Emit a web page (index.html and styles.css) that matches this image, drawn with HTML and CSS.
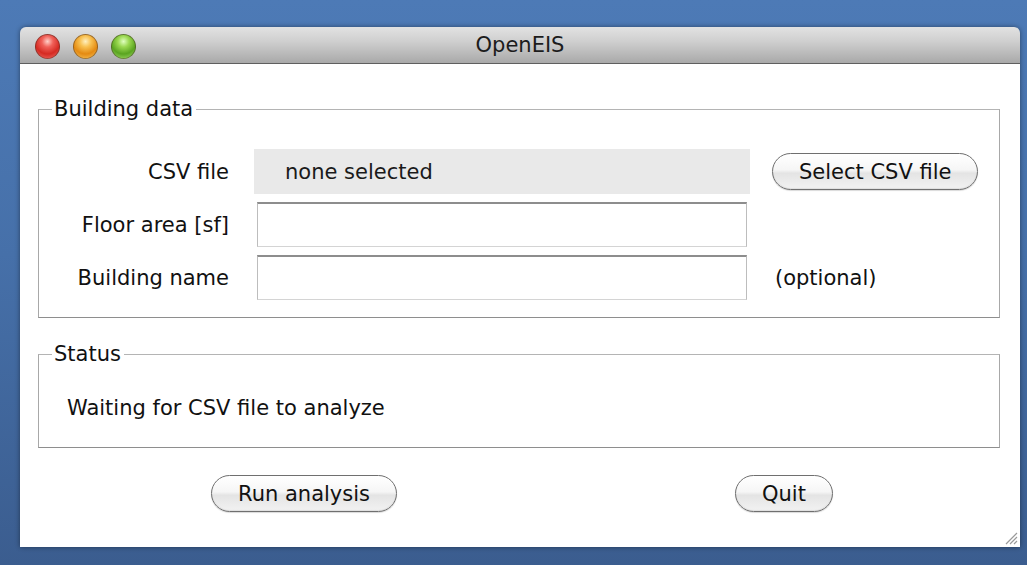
FILE: index.html
```html
<!DOCTYPE html>
<html>
<head>
<meta charset="utf-8">
<title>OpenEIS</title>
<link rel="stylesheet" href="styles.css">
</head>
<body>
<div class="window">
  <div class="titlebar">
    <div class="lights">
      <span class="light red"></span>
      <span class="light amber"></span>
      <span class="light green"></span>
    </div>
    <div class="title">OpenEIS</div>
  </div>
  <div class="pane">
    <fieldset class="group building">
      <legend>Building data</legend>
      <div class="form">
        <label class="lbl">CSV file</label>
        <div class="filebox">none selected</div>
        <button class="pill">Select CSV file</button>

        <label class="lbl">Floor area [sf]</label>
        <div class="field"></div>
        <span></span>

        <label class="lbl">Building name</label>
        <div class="field"></div>
        <span class="note">(optional)</span>
      </div>
    </fieldset>

    <fieldset class="group status">
      <legend>Status</legend>
      <p class="status-text">Waiting for CSV file to analyze</p>
    </fieldset>

    <div class="actions">
      <button class="pill">Run analysis</button>
      <button class="pill">Quit</button>
    </div>

    <svg class="grip" width="16" height="16" viewBox="0 0 16 16">
      <path d="M15 4 L4 15 M15 8 L8 15 M15 12 L12 15" stroke="#9a9a9a" stroke-width="1.2" fill="none"/>
    </svg>
  </div>
</div>
</body>
</html>
```

FILE: styles.css
```css
html, body {
  margin: 0;
  padding: 0;
}

body {
  width: 1027px;
  height: 565px;
  overflow: hidden;
  background: linear-gradient(180deg, #4d7ab6 0%, #4670a9 45%, #3b5d8f 100%);
  font-family: "DejaVu Sans", "Liberation Sans", sans-serif;
  color: #111111;
}

.window {
  margin: 27px 0 0 20px;
  width: 1000px;
  height: 520px;
  display: flex;
  flex-direction: column;
  border-radius: 6px 6px 0 0;
  box-shadow: 0 0 5px rgba(0, 0, 0, 0.45);
  overflow: hidden;
}

.titlebar {
  height: 36px;
  flex: none;
  position: relative;
  display: flex;
  align-items: center;
  justify-content: center;
  background: linear-gradient(180deg, #e2e2e2 0%, #cfcfcf 40%, #a9a9a9 100%);
  border-bottom: 1px solid #5f5f5f;
}

.lights {
  position: absolute;
  left: 15px;
  top: 7px;
  display: flex;
  gap: 13px;
}

.light {
  width: 25px;
  height: 25px;
  border-radius: 50%;
  box-sizing: border-box;
  border: 1px solid rgba(60, 40, 30, 0.45);
}

.light.red {
  background: radial-gradient(circle at 50% 28%, #ffd0c8 0%, #f06058 28%, #d52a22 62%, #f07068 100%);
}

.light.amber {
  background: radial-gradient(circle at 50% 28%, #fff0c0 0%, #f8c050 28%, #e48a12 62%, #f8c860 100%);
}

.light.green {
  background: radial-gradient(circle at 50% 28%, #e0ffc0 0%, #9ad850 28%, #5aa420 62%, #a8e070 100%);
}

.title {
  font-size: 21px;
  color: #1c1c1c;
}

.pane {
  flex: 1;
  position: relative;
  background: #ffffff;
  padding: 0 20px 0 18px;
}

.group {
  margin: 0;
  border: 1px solid #a8a8a8;
  border-top-color: #b4b4b4;
  border-bottom-color: #8e8e8e;
  padding: 0;
}

.group legend {
  font-size: 21px;
  padding: 0 3px 0 2px;
  margin-left: 13px;
  line-height: 24px;
}

.building {
  margin-top: 33px;
  padding-bottom: 17px;
}

.form {
  display: grid;
  grid-template-columns: 190px 496px auto;
  grid-auto-rows: 45px;
  column-gap: 25px;
  row-gap: 8px;
  padding-top: 28px;
  font-size: 21px;
}

.lbl {
  display: flex;
  align-items: center;
  justify-content: flex-end;
}

.filebox {
  background: #e9e9e9;
  display: flex;
  align-items: center;
  padding-left: 31px;
  color: #1a1a1a;
}

.field {
  margin: 0 3px;
  box-sizing: border-box;
  background: #ffffff;
  border: 1px solid #bdbdbd;
  border-top: 2px solid #8d8d8d;
  border-bottom-color: #d4d4d4;
}

.form .pill {
  justify-self: start;
  align-self: center;
  margin-left: -3px;
}

.note {
  display: flex;
  align-items: center;
}

.pill {
  font-family: inherit;
  font-size: 21px;
  color: #111111;
  height: 37px;
  padding: 0 26px;
  border-radius: 19px;
  border: 1px solid #6f6f6f;
  background: linear-gradient(180deg, #ffffff 0%, #f6f6f6 45%, #e4e4e4 55%, #f2f2f2 100%);
  box-shadow: inset 0 -1px 1px rgba(0, 0, 0, 0.08), 0 1px 1px rgba(0, 0, 0, 0.15);
  cursor: default;
}

.status {
  margin-top: 24px;
  padding: 30px 0 27px 0;
}

.status-text {
  margin: 0;
  padding-left: 28px;
  font-size: 21px;
  line-height: 24px;
}

.actions {
  display: grid;
  grid-template-columns: 1fr 1fr;
  justify-items: center;
  margin: 27px -24px 0 26px;
}

.grip {
  position: absolute;
  right: 2px;
  bottom: 2px;
}
```
